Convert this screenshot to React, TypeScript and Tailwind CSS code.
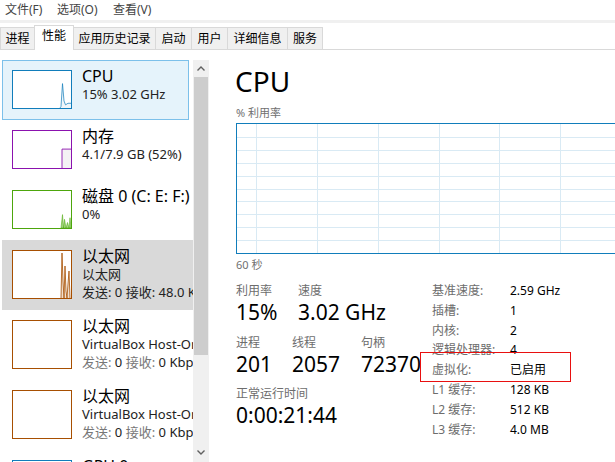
import type { ReactNode } from "react";

function Thumb({ className, children }: { className: string; children?: ReactNode }) {
  return (
    <div className={"w-[60px] shrink-0 border bg-white " + className}>
      <svg className="h-full w-full" viewBox="0 0 58 47" preserveAspectRatio="none">
        {children}
      </svg>
    </div>
  );
}

function ListItem({
  boxClass,
  thumb,
  children,
}: {
  boxClass: string;
  thumb: ReactNode;
  children: ReactNode;
}) {
  return (
    <div className={"ml-[2px] flex border pl-[9px] pt-[9px] " + boxClass}>
      {thumb}
      <div className="-mt-[3px] ml-[10px] whitespace-nowrap">{children}</div>
    </div>
  );
}

function Title({ children }: { children: ReactNode }) {
  return <div className="text-[16px] leading-[18px] text-black">{children}</div>;
}

function Sub({ children }: { children: ReactNode }) {
  return <div className="text-[13px] leading-[18px] text-[#222]">{children}</div>;
}

function NetStats({ rx }: { rx: string }) {
  return (
    <div className="text-[13px] leading-[18px] text-[#222]">
      <span className="text-[#777]">发送:</span> 0 <span className="text-[#777]">接收:</span> {rx}
    </div>
  );
}

function Stat({ label, value, className }: { label: string; value: string; className: string }) {
  return (
    <div className={className}>
      <div className="text-[12px] leading-[16px] text-[#6d6d6d]">{label}</div>
      <div className="text-[21px] leading-[26px] text-black">{value}</div>
    </div>
  );
}

const tabs = [
  { name: "进程", w: "w-[35px]" },
  { name: "性能", w: "w-[40px]", active: true },
  { name: "应用历史记录", w: "w-[83px]" },
  { name: "启动", w: "w-[37px]" },
  { name: "用户", w: "w-[37px]" },
  { name: "详细信息", w: "w-[61px]" },
  { name: "服务", w: "w-[36px]" },
];

const details: [string, string][] = [
  ["基准速度:", "2.59 GHz"],
  ["插槽:", "1"],
  ["内核:", "2"],
  ["逻辑处理器:", "4"],
  ["虚拟化:", "已启用"],
  ["L1 缓存:", "128 KB"],
  ["L2 缓存:", "512 KB"],
  ["L3 缓存:", "4.0 MB"],
];

export default function App() {
  return (
    <div className="flex h-[462px] w-[615px] flex-col overflow-hidden bg-white font-['Noto_Sans','Noto_Sans_CJK_SC',sans-serif] text-black">
      {/* menu */}
      <div className="flex h-[20px] items-center pl-[5px] text-[12px] text-[#444]">
        <span className="w-[52px]">文件(F)</span>
        <span className="w-[56px]">选项(O)</span>
        <span>查看(V)</span>
      </div>
      <div className="h-[3px] bg-[#f0f0f0]" />

      {/* tabs */}
      <div className="flex h-[27px] items-end border-b border-[#d9d9d9] pl-[1px]">
        {tabs.map((t) =>
          t.active ? (
            <div
              key={t.name}
              className={"-mb-px -ml-px flex h-[25px] items-start justify-center border border-b-0 border-[#d9d9d9] bg-white pt-[2px] text-[12px] leading-[16px] " + t.w}
            >
              {t.name}
            </div>
          ) : (
            <div
              key={t.name}
              className={"-ml-px flex h-[22px] items-center justify-center border border-b-0 border-[#d9d9d9] bg-[#f0f0f0] text-[12px] " + t.w}
            >
              {t.name}
            </div>
          )
        )}
      </div>

      <div className="flex flex-1 overflow-hidden">
        {/* left list */}
        <div className="flex w-[209px] shrink-0 pt-[10px]">
          <div className="w-[193px] overflow-hidden">
            <ListItem
              boxClass="h-[60px] w-[187px] border-[#7cc0ea] bg-[#e5f3fb]"
              thumb={
                <Thumb className="h-[39px] border-[#117dbb]">
                  <polygon points="47,47 48,45 49.5,16 51,38 52.5,43 55,41 58,41 58,47" fill="#f1f6fa" />
                  <polyline points="47,47 48,45 49.5,16 51,38 52.5,43 55,41 58,41" fill="none" stroke="#117dbb" strokeWidth="0.8" />
                </Thumb>
              }
            >
              <Title>CPU</Title>
              <Sub>15% 3.02 GHz</Sub>
            </ListItem>
            <ListItem
              boxClass="h-[60px] w-[191px] border-transparent"
              thumb={
                <Thumb className="h-[39px] border-[#8b12ae]">
                  <rect x="49" y="23" width="9" height="24" fill="#f4f2f4" />
                  <polyline points="49,47 49,23 58,23" fill="none" stroke="#8b12ae" strokeWidth="1" />
                </Thumb>
              }
            >
              <Title>内存</Title>
              <Sub>4.1/7.9 GB (52%)</Sub>
            </ListItem>
            <ListItem
              boxClass="h-[60px] w-[191px] border-transparent"
              thumb={
                <Thumb className="h-[39px] border-[#4da60c]">
                  <polygon points="48,47 49.5,30 50.5,47 51.5,36 53,47 54.5,40 56,47 57,34 58,47" fill="#a6d884" stroke="#4da60c" strokeWidth="0.6" />
                </Thumb>
              }
            >
              <Title>磁盘 0 (C: E: F:)</Title>
              <Sub>0%</Sub>
            </ListItem>
            <ListItem
              boxClass="h-[70px] w-[191px] border-transparent bg-[#d9d9d9]"
              thumb={
                <Thumb className="h-[49px] border-[#a74f01]">
                  <polygon points="48,47 49,2 50,30 51,47 52,15 53,40 54,47 55,33 56,20 57,47" fill="#f0e0d0" />
                  <polyline points="48,47 49,2 50,30 51,47 52,15 53,40 54,47 55,33 56,20 57,47" fill="none" stroke="#a74f01" strokeWidth="0.8" />
                </Thumb>
              }
            >
              <Title>以太网</Title>
              <Sub>以太网</Sub>
              <div className="text-[13px] leading-[18px] text-[#222]">发送: 0 接收: 48.0 Kbps</div>
            </ListItem>
            <ListItem
              boxClass="h-[70px] w-[191px] border-transparent"
              thumb={<Thumb className="h-[49px] border-[#a74f01]" />}
            >
              <Title>以太网</Title>
              <Sub>VirtualBox Host-Only Network</Sub>
              <NetStats rx="0 Kbps" />
            </ListItem>
            <ListItem
              boxClass="h-[70px] w-[191px] border-transparent"
              thumb={<Thumb className="h-[49px] border-[#a74f01]" />}
            >
              <Title>以太网</Title>
              <Sub>VirtualBox Host-Only Network</Sub>
              <NetStats rx="0 Kbps" />
            </ListItem>
            <ListItem
              boxClass="h-[60px] w-[191px] border-transparent"
              thumb={<Thumb className="h-[39px] border-[#117dbb]" />}
            >
              <Title>GPU 0</Title>
              <Sub>Intel(R) HD Graphics</Sub>
            </ListItem>
          </div>

          {/* scrollbar */}
          <div className="flex w-[16px] flex-col bg-[#f0f0f0]">
            <div className="flex h-[17px] items-center justify-center">
              <svg width="8" height="5" viewBox="0 0 8 5">
                <polyline points="0.5,4.5 4,1 7.5,4.5" fill="none" stroke="#606060" strokeWidth="1.4" />
              </svg>
            </div>
            <div className="mx-px h-[278px] bg-[#cdcdcd]" />
            <div className="flex-1" />
            <div className="flex h-[17px] items-center justify-center pb-[2px]">
              <svg width="8" height="5" viewBox="0 0 8 5">
                <polyline points="0.5,0.5 4,4 7.5,0.5" fill="none" stroke="#606060" strokeWidth="1.4" />
              </svg>
            </div>
          </div>
        </div>

        {/* right panel */}
        <div className="flex-1 pl-[27px] pt-[12px]">
          <div className="-ml-px text-[28px] leading-[38px]">CPU</div>
          <div className="mt-[6px] text-[11px] leading-[14px] text-[#707070]">% 利用率</div>
          <div className="mt-[3px] h-[131px] w-[420px] border border-[#117dbb]">
            <svg width="418" height="129" viewBox="0 0 418 129">
              {[1, 2, 3, 4, 5, 6, 7, 8, 9].map((i) => (
                <line key={"h" + i} x1="0" x2="418" y1={Math.round(i * 12.9) + 0.5} y2={Math.round(i * 12.9) + 0.5} stroke="#d9eaf4" />
              ))}
              {[19, 80, 141, 202, 262, 323, 384].map((x) => (
                <line key={"v" + x} x1={x + 0.5} x2={x + 0.5} y1="0" y2="129" stroke="#d9eaf4" />
              ))}
            </svg>
          </div>
          <div className="mt-[4px] text-[11px] leading-[14px] text-[#707070]">60 秒</div>

          <div className="mt-[9px] flex">
            <div className="w-[196px] shrink-0 pt-[2px]">
              <div className="flex">
                <Stat className="w-[62px]" label="利用率" value="15%" />
                <Stat className="" label="速度" value="3.02 GHz" />
              </div>
              <div className="mt-[10px] flex">
                <Stat className="w-[56px]" label="进程" value="201" />
                <Stat className="w-[69px]" label="线程" value="2057" />
                <Stat className="" label="句柄" value="72370" />
              </div>
              <Stat className="mt-[9px]" label="正常运行时间" value="0:00:21:44" />
            </div>

            <div className="relative">
              <div className="grid grid-cols-[78px_auto] text-[12px] leading-[19.8px]">
                {details.map(([k, v]) => (
                  <div key={k} className="contents">
                    <span className="text-[#6d6d6d]">{k}</span>
                    <span className="whitespace-nowrap text-black">{v}</span>
                  </div>
                ))}
              </div>
              <div className="absolute left-[-12px] top-[71px] h-[30px] w-[151px] border border-[#e81010]" />
            </div>
          </div>
        </div>
      </div>
    </div>
  );
}
